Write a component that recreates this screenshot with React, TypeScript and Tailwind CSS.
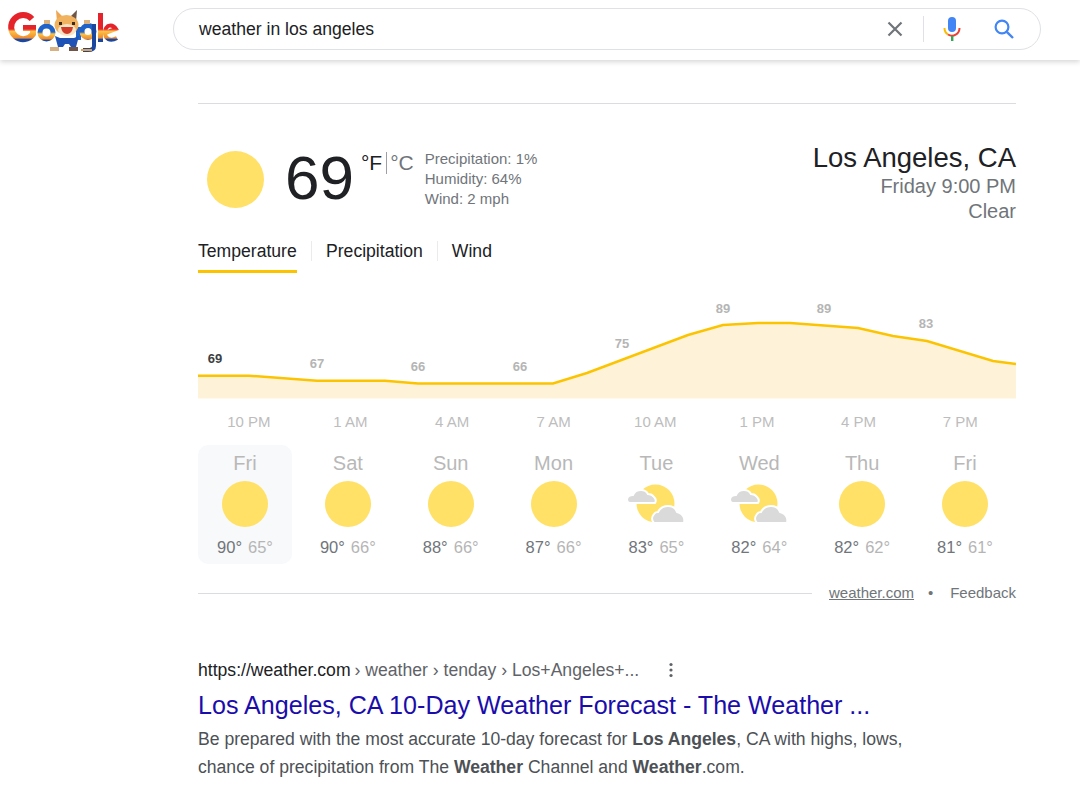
const hourly = ["10 PM", "1 AM", "4 AM", "7 AM", "10 AM", "1 PM", "4 PM", "7 PM"];

const chartLabels = [
  { x: 17, y: 73, t: "69", dark: true },
  { x: 119, y: 78, t: "67" },
  { x: 220, y: 81, t: "66" },
  { x: 322, y: 81, t: "66" },
  { x: 424, y: 58, t: "75" },
  { x: 525, y: 23, t: "89" },
  { x: 626, y: 23, t: "89" },
  { x: 728, y: 38, t: "83" },
];

const line =
  "0,85.7 51,85.7 119,90.7 187,90.7 220,93.5 355,93.5 389,83 490,45 525,35 560,33 592,33 660,38 695,46 729,51 795,71 818,74";

const days = [
  { d: "Fri", hi: 90, lo: 65, active: true },
  { d: "Sat", hi: 90, lo: 66 },
  { d: "Sun", hi: 88, lo: 66 },
  { d: "Mon", hi: 87, lo: 66 },
  { d: "Tue", hi: 83, lo: 65, cloudy: true },
  { d: "Wed", hi: 82, lo: 64, cloudy: true },
  { d: "Thu", hi: 82, lo: 62 },
  { d: "Fri", hi: 81, lo: 61 },
];

function Logo() {
  return (
    <svg width="116" height="52" viewBox="6 4 116 52" className="ml-[6px] shrink-0">
      <defs>
        <linearGradient id="redBand" gradientUnits="userSpaceOnUse" x1="0" y1="12" x2="0" y2="43">
          <stop offset="0" stopColor="#e5232a" />
          <stop offset="0.55" stopColor="#e5232a" />
          <stop offset="0.62" stopColor="#fbc347" />
          <stop offset="0.84" stopColor="#f0892c" />
          <stop offset="0.88" stopColor="#1c479f" />
          <stop offset="1" stopColor="#1c479f" />
        </linearGradient>
        <linearGradient id="blueBand" gradientUnits="userSpaceOnUse" x1="0" y1="23" x2="0" y2="43">
          <stop offset="0" stopColor="#1f62c8" />
          <stop offset="0.45" stopColor="#1f62c8" />
          <stop offset="0.55" stopColor="#fbc347" />
          <stop offset="0.8" stopColor="#ee8a2c" />
          <stop offset="0.86" stopColor="#1c479f" />
          <stop offset="1" stopColor="#1c479f" />
        </linearGradient>
      </defs>
      {/* G */}
      <path d="M32 19 A12 12 0 1 0 33 34 L33 28 L23 28" fill="none" stroke="url(#redBand)" strokeWidth="6" />
      {/* o */}
      <circle cx="46.5" cy="32.5" r="6.5" fill="none" stroke="url(#blueBand)" strokeWidth="5" />
      {/* o behind the cat */}
      <rect x="76" y="27" width="5" height="13" fill="#1f62c8" />
      {/* g */}
      <circle cx="88" cy="31.5" r="6" fill="none" stroke="url(#blueBand)" strokeWidth="5" />
      <path d="M94 24 V46 Q94 50 88 50 H83" fill="none" stroke="#1c479f" strokeWidth="4" />
      <rect x="81" y="49" width="11" height="2" fill="#e9a23a" />
      {/* l */}
      <rect x="98" y="13" width="5" height="29" fill="url(#redBand)" />
      {/* e */}
      <path d="M105 33 L116 29 Q113 24 108 26 Q103 30 106 37 Q110 42 117 38" fill="none" stroke="url(#redBand)" strokeWidth="4" />
      {/* hands */}
      <rect x="44" y="20" width="6" height="4" fill="#dcb27c" />
      <rect x="84" y="20" width="6" height="4" fill="#dcb27c" />
      {/* cat */}
      <path d="M56 10 L57 22 L63 17 Z" fill="#eda651" />
      <path d="M77 10 L76 22 L70 17 Z" fill="#6e5547" />
      <ellipse cx="66.5" cy="25" rx="12" ry="10" fill="#f1b35f" />
      <ellipse cx="67" cy="30" rx="9" ry="6" fill="#f7e5c6" />
      <path d="M61 27 H73 Q72 34 67 34 Q62 34 61 27 Z" fill="#d23c28" />
      <rect x="59" y="22" width="3" height="3" fill="#3a2a20" />
      <rect x="72" y="22" width="3" height="3" fill="#3a2a20" />
      <path d="M55 36 L60 38 H74 L79 36 L76 47 H71 L69 44 H65 L63 47 H58 Z" fill="#1f53b5" />
      <rect x="50" y="47" width="9" height="4" fill="#d6b184" />
      <rect x="69" y="47" width="9" height="4" fill="#6e5547" />
    </svg>
  );
}

function Sun({ size }: { size: number }) {
  return (
    <svg width={size} height={size} viewBox="0 0 46 46" className="block">
      <circle cx="23" cy="23" r="23" fill="#ffe168" />
    </svg>
  );
}

function PartlyCloudy() {
  return (
    <svg width="60" height="46" viewBox="0 0 60 46" className="block">
      <circle cx="29.5" cy="22.5" r="19" fill="#ffe168" />
      <path
        d="M4 22 Q1 22 1 18 Q2 14 7 14 Q9 9 15 9 Q20 9 22 13 Q26 13 28 16 Q31 19 29 22 Z"
        fill="#dadada"
        stroke="#fff"
        strokeWidth="2"
      />
      <path
        d="M28 42 Q24 38 28 33 Q29 31 32 31 Q35 25 42 25 Q49 25 51 31 Q56 32 58 37 Q59 42 57 42 Z"
        fill="#dadada"
        stroke="#fff"
        strokeWidth="2"
      />
    </svg>
  );
}

export default function App() {
  return (
    <div className="h-[797px] w-[1080px] overflow-hidden bg-white font-['Liberation_Sans',Arial,sans-serif]">
      {/* Header */}
      <header className="flex h-[60px] items-center bg-white shadow-[0_2px_5px_rgba(0,0,0,0.16)]">
        <Logo />
        <div className="ml-[51px] mt-[-2px] flex h-[42px] w-[868px] items-center rounded-[22px] border border-[#dfe1e5] pl-[25px]">
          <span className="flex-1 text-[17.6px] text-[#202124]">weather in los angeles</span>
          <svg width="24" height="24" viewBox="0 0 24 24" className="mr-[16px]">
            <path d="M5.5 5.5 L18.5 18.5 M18.5 5.5 L5.5 18.5" stroke="#70757a" strokeWidth="2.2" fill="none" />
          </svg>
          <span className="h-[26px] w-px bg-[#dfe1e5]" />
          <svg width="24" height="28" viewBox="0 0 24 28" className="ml-[16px]">
            <rect x="8" y="2" width="8" height="15" rx="4" fill="#4285f4" />
            <path d="M4.5 13 A7.5 7.5 0 0 0 8 19.5" fill="none" stroke="#fbbc04" strokeWidth="2" />
            <path d="M8 19.5 A7.5 7.5 0 0 0 19.5 13" fill="none" stroke="#ea4335" strokeWidth="2" />
            <rect x="11" y="21" width="2.4" height="5" fill="#34a853" />
          </svg>
          <svg width="24" height="24" viewBox="0 0 24 24" className="ml-[28px] mr-[24px]">
            <circle cx="10" cy="10" r="6.4" fill="none" stroke="#4285f4" strokeWidth="2.2" />
            <path d="M14.8 14.8 L21 21" stroke="#4285f4" strokeWidth="2.4" fill="none" />
          </svg>
        </div>
      </header>

      <main className="ml-[198px] w-[818px]">
        <div className="mt-[43px] border-t border-[#dadce0]" />

        {/* Current conditions */}
        <div className="mt-[39px] flex h-[87px] items-start justify-between">
          <div className="flex items-start">
            <div className="ml-[9px] mt-[8px]">
              <Sun size={57} />
            </div>
            <div className="ml-[21px] mt-[1px] text-[62px] leading-[68px] text-[#202124]">69</div>
            <div className="ml-[7px] mt-[8px] flex items-center text-[21px] leading-[24px]">
              <span className="text-[#202124]">°F</span>
              <span className="ml-[4px] mr-[3px] h-[22px] w-px bg-[#9aa0a6]" />
              <span className="text-[#70757a]">°C</span>
            </div>
            <div className="ml-[11px] mt-[6px] text-[15px] leading-[20px] text-[#70757a]">
              <div>Precipitation: 1%</div>
              <div>Humidity: 64%</div>
              <div>Wind: 2 mph</div>
            </div>
          </div>
          <div className="text-right">
            <div className="text-[27.5px] leading-[30px] text-[#202124]">Los Angeles, CA</div>
            <div className="mt-[1px] text-[20px] leading-[25px] text-[#70757a]">Friday 9:00 PM</div>
            <div className="text-[20px] leading-[25px] text-[#70757a]">Clear</div>
          </div>
        </div>

        {/* Tabs */}
        <div className="mt-[11px] flex h-[32px] items-start text-[17.6px] leading-[20px] text-[#202124]">
          <div className="h-[32px] w-[99px] border-b-[3px] border-[#fcc400]">Temperature</div>
          <span className="ml-[14px] h-[20px] w-px bg-[#ebebeb]" />
          <div className="ml-[14px]">Precipitation</div>
          <span className="ml-[14px] h-[20px] w-px bg-[#ebebeb]" />
          <div className="ml-[14px]">Wind</div>
        </div>

        {/* Chart */}
        <svg width="818" height="110" viewBox="0 0 818 110" className="mt-[17px] block">
          <polygon points={`${line} 818,108.5 0,108.5`} fill="#fef3d8" />
          <polyline points={line} fill="none" stroke="#fcc400" strokeWidth="2.5" />
          {chartLabels.map((l) => (
            <text
              key={l.x}
              x={l.x}
              y={l.y}
              textAnchor="middle"
              fontSize="13"
              fontWeight="700"
              fill={l.dark ? "#3c4043" : "#b5b5b5"}
            >
              {l.t}
            </text>
          ))}
        </svg>

        <div className="mt-[12px] grid w-[813px] grid-cols-8 text-center text-[15px] leading-[20px] text-[#bdbdbd]">
          {hourly.map((h) => (
            <div key={h}>{h}</div>
          ))}
        </div>

        {/* Daily forecast */}
        <div className="mt-[13px] grid w-[814px] grid-cols-8 gap-x-[8.9px]">
          {days.map((day, i) => (
            <div
              key={i}
              className={
                day.active
                  ? "flex h-[119px] flex-col items-center rounded-[10px] bg-[#f8f9fa]"
                  : "flex h-[119px] flex-col items-center rounded-[10px]"
              }
            >
              <div className="mt-[6px] text-[20px] leading-[24px] text-[#b8b8b8]">{day.d}</div>
              <div className="mt-[6px] flex h-[46px] items-center justify-center">
                {day.cloudy ? <PartlyCloudy /> : <Sun size={46} />}
              </div>
              <div className="mt-[10px] text-[16.5px] leading-[20px]">
                <span className="text-[#70757a]">{day.hi}°</span>
                <span className="ml-[6px] text-[#b5b5b5]">{day.lo}°</span>
              </div>
            </div>
          ))}
        </div>

        {/* Attribution */}
        <div className="mt-[19px] flex h-[20px] items-center text-[15px] text-[#70757a]">
          <div className="w-[614px] border-t border-[#dadce0]" />
          <span className="ml-[17px] underline">weather.com</span>
          <span className="ml-[14px] text-[15px]">•</span>
          <span className="ml-auto">Feedback</span>
        </div>

        {/* Search result */}
        <div className="mt-[55px] flex h-[24px] items-center text-[17.6px]">
          <span className="text-[#202124]">https://weather.com</span>
          <span className="ml-[4px] text-[#5f6368]">› weather › tenday › Los+Angeles+...</span>
          <svg width="4" height="16" viewBox="0 0 4 16" className="ml-[30px]">
            <circle cx="2" cy="2.5" r="1.6" fill="#5f6368" />
            <circle cx="2" cy="8" r="1.6" fill="#5f6368" />
            <circle cx="2" cy="13.5" r="1.6" fill="#5f6368" />
          </svg>
        </div>
        <div className="mt-[7px] text-[25.1px] leading-[32px] text-[#1a0dab]">
          Los Angeles, CA 10-Day Weather Forecast - The Weather ...
        </div>
        <p className="mt-[4px] whitespace-nowrap text-[17.6px] leading-[28px] text-[#4d5156]">
          Be prepared with the most accurate 10-day forecast for <b>Los Angeles</b>, CA with highs, lows,
          <br />
          chance of precipitation from The <b>Weather</b> Channel and <b>Weather</b>.com.
        </p>
      </main>
    </div>
  );
}
